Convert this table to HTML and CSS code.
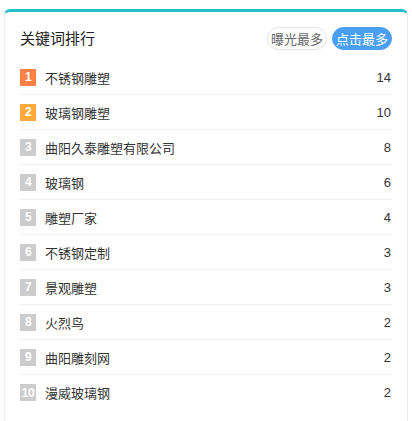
FILE: index.html
```html
<!DOCTYPE html>
<html lang="zh-CN">
<head>
<meta charset="utf-8">
<link rel="stylesheet" href="styles.css">
</head>
<body>
<div class="page">
  <section class="card">
    <header class="card-head">
      <h2 class="title">关键词排行</h2>
      <div class="tabs">
        <span class="tab">曝光最多</span>
        <span class="tab active">点击最多</span>
      </div>
    </header>
    <ul class="rank">
      <li class="row"><span class="badge b1">1</span><span class="name">不锈钢雕塑</span><span class="num">14</span></li>
      <li class="row"><span class="badge b2">2</span><span class="name">玻璃钢雕塑</span><span class="num">10</span></li>
      <li class="row"><span class="badge">3</span><span class="name">曲阳久泰雕塑有限公司</span><span class="num">8</span></li>
      <li class="row"><span class="badge">4</span><span class="name">玻璃钢</span><span class="num">6</span></li>
      <li class="row"><span class="badge">5</span><span class="name">雕塑厂家</span><span class="num">4</span></li>
      <li class="row"><span class="badge">6</span><span class="name">不锈钢定制</span><span class="num">3</span></li>
      <li class="row"><span class="badge">7</span><span class="name">景观雕塑</span><span class="num">3</span></li>
      <li class="row"><span class="badge">8</span><span class="name">火烈鸟</span><span class="num">2</span></li>
      <li class="row"><span class="badge">9</span><span class="name">曲阳雕刻网</span><span class="num">2</span></li>
      <li class="row"><span class="badge">10</span><span class="name">漫威玻璃钢</span><span class="num">2</span></li>
    </ul>
  </section>
</div>
</body>
</html>
```

FILE: styles.css
```css
* { box-sizing: border-box; }
html, body { margin: 0; padding: 0; background: #fff; }
body {
  font-family: "Liberation Sans", Arial, "Noto Sans CJK SC", sans-serif;
  color: #333;
}
.page { padding: 9px 4px 0 4px; }
.card {
  background: #fff;
  border: 1px solid #ececec;
  border-top: 3px solid #22bfcf;
  border-radius: 6px 6px 0 0;
  padding: 0 15px 20px;
}
.card-head {
  display: flex;
  align-items: center;
  justify-content: space-between;
  padding: 15px 0 10px;
}
.title {
  margin: 0;
  font-size: 15px;
  font-weight: normal;
  color: #222;
  line-height: 23px;
}
.tabs { display: flex; gap: 5px; }
.tab {
  display: inline-flex;
  align-items: center;
  justify-content: center;
  width: 60px;
  height: 23px;
  border: 1px solid #e2e2e2;
  border-radius: 12px;
  font-size: 13px;
  color: #666;
}
.tab.active {
  background: #4a9ff3;
  border-color: #4a9ff3;
  color: #fff;
}
.rank { list-style: none; margin: 0; padding: 0; }
.row {
  display: flex;
  align-items: center;
  height: 35px;
  border-bottom: 1px solid #f0f0f0;
  font-size: 13px;
}
.row:last-child { border-bottom: none; }
.badge {
  width: 16px;
  height: 17px;
  display: inline-flex;
  align-items: center;
  justify-content: center;
  background: #cccccc;
  color: #fff;
  font-size: 12px;
  font-weight: bold;
  margin-right: 9px;
  flex: none;
  letter-spacing: -0.5px;
}
.badge.b1 { background: #fa8046; }
.badge.b2 { background: #fbaa3b; }
.name { flex: 1; color: #333; }
.num { color: #333; font-size: 13px; padding-right: 1px; }
```
